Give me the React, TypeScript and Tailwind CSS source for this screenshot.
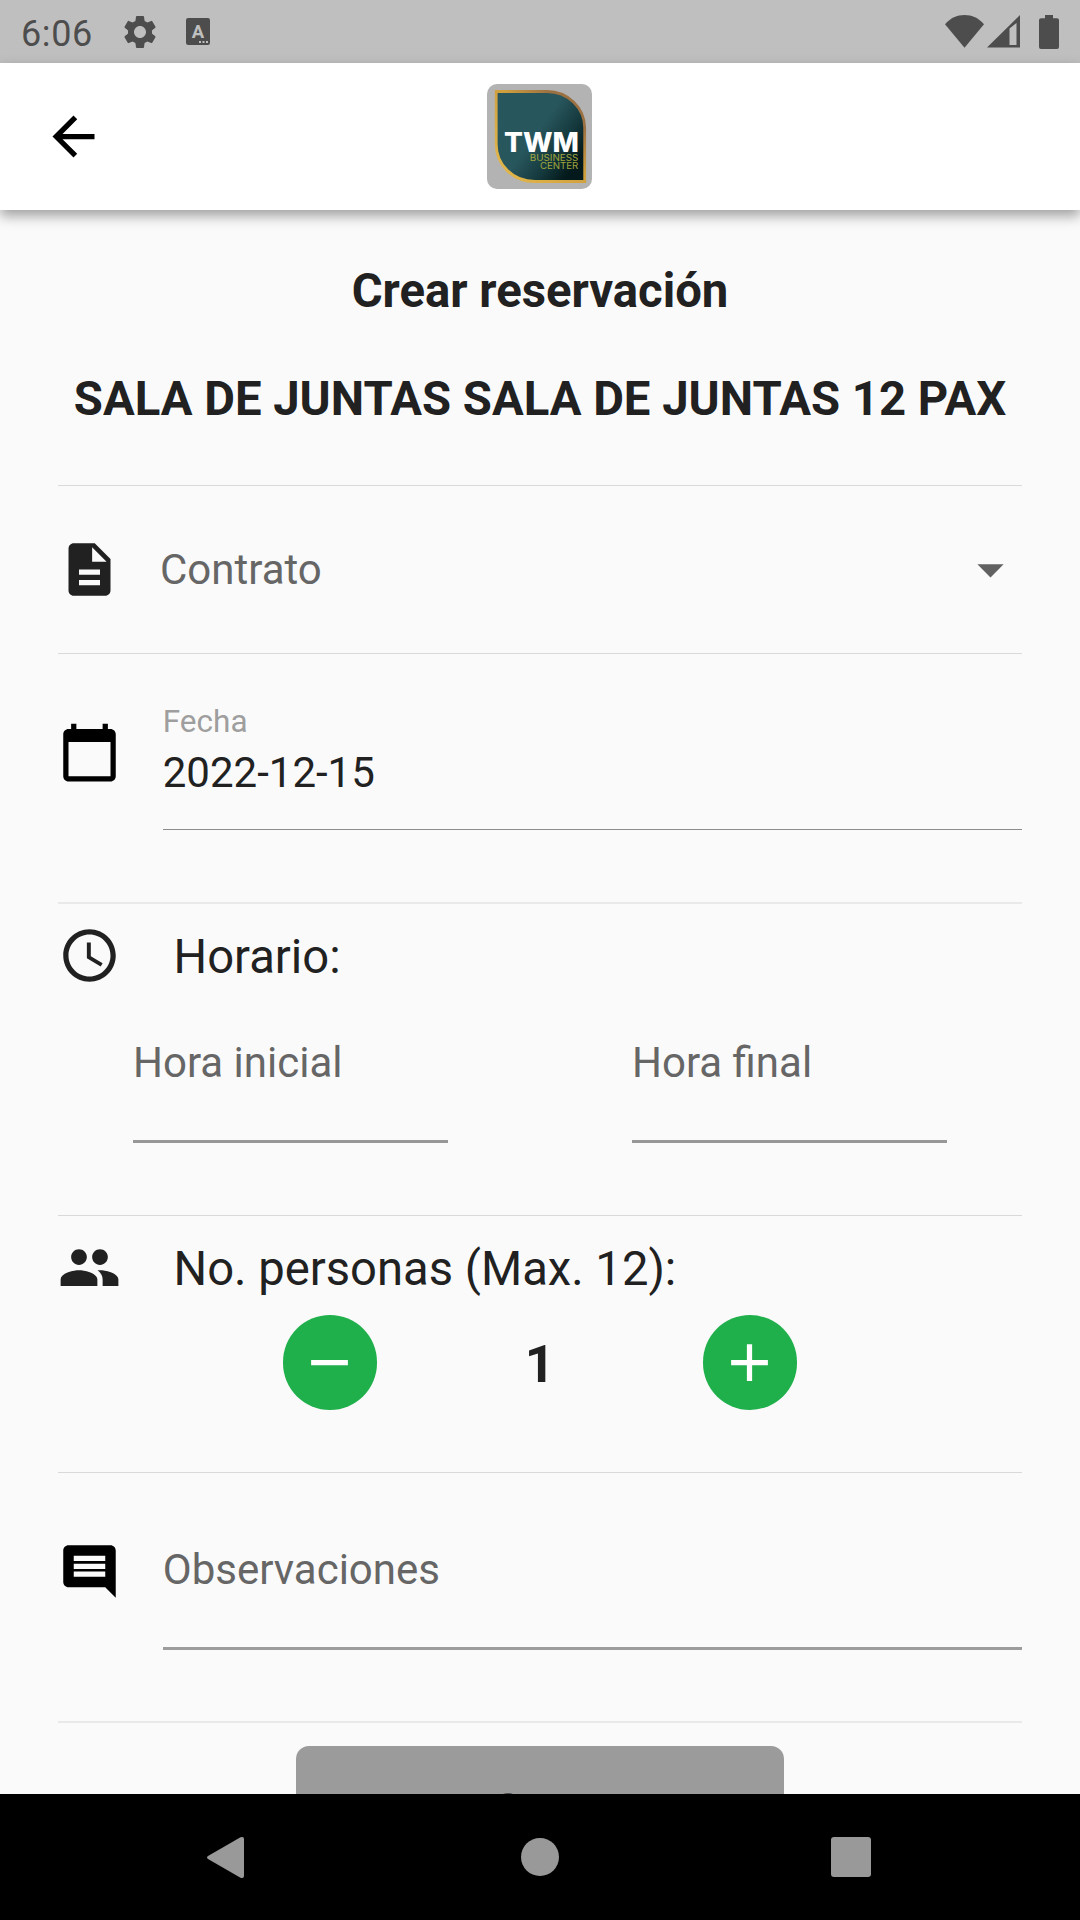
import { useState, type ReactNode } from 'react';
import {
  MdAccessTime,
  MdAdd,
  MdArrowBack,
  MdArrowDropDown,
  MdCalendarToday,
  MdComment,
  MdDescription,
  MdPeople,
  MdRemove,
  MdSettings,
} from 'react-icons/md';

const MAX_PEOPLE = 12;

function StatusBar() {
  return (
    <header className="flex h-[63px] shrink-0 items-center bg-[#bfbfbf] pl-[21px] pr-[21px] text-[#4d4d4d]">
      <span className="mt-[4px] w-[72px] text-[36px] leading-[42px] tracking-[0.6px]">6:06</span>
      <MdSettings className="ml-[27px] size-[40px]" />
      <svg className="ml-[26px] h-[27px] w-[24px]" viewBox="0 0 24 27">
        <rect width="24" height="27" rx="2.2" fill="#4d4d4d" />
        <text x="12" y="19.5" textAnchor="middle" fontFamily="Roboto, sans-serif" fontWeight="700" fontSize="18.5" fill="#bfbfbf">A</text>
        <path d="M13 23h2v2h-2zM16.5 23h2v2h-2zM20 23h2v2h-2z" fill="#bfbfbf" />
      </svg>
      <div className="ml-auto flex items-center">
        <svg className="h-[33px] w-[39px]" viewBox="0 0 39 33">
          <path d="M0 9.3C5.5 3 12 0 19.5 0S33.5 3 39 9.3L19.5 32.7z" fill="currentColor" />
        </svg>
        <svg className="ml-[3px] h-[33px] w-[33px]" viewBox="0 0 33 33">
          <path fillRule="evenodd" d="M0 32.5L33 0v32.5zM22.5 13.5v16.5h7V8z" fill="currentColor" />
        </svg>
        <svg className="ml-[19px] mt-[1px] h-[34px] w-[20px]" viewBox="0 0 20 34">
          <path d="M6 0h8v3.3h4a2 2 0 0 1 2 2V32a2 2 0 0 1-2 2H2a2 2 0 0 1-2-2V5.3a2 2 0 0 1 2-2h4z" fill="currentColor" />
        </svg>
      </div>
    </header>
  );
}

function Logo() {
  return (
    <svg className="size-[105px]" viewBox="0 0 105 105">
      <defs>
        <linearGradient id="leaf" x1="0.1" y1="0.1" x2="1" y2="0.75">
          <stop offset="0.45" stopColor="#28565d" />
          <stop offset="0.72" stopColor="#153a3e" />
          <stop offset="0.95" stopColor="#04191b" />
        </linearGradient>
        <linearGradient id="gold" x1="0" y1="1" x2="1" y2="0">
          <stop offset="0" stopColor="#e3b94c" />
          <stop offset="0.3" stopColor="#d9ac45" />
          <stop offset="0.55" stopColor="#cf9f3e" />
          <stop offset="0.8" stopColor="#9c7142" />
        </linearGradient>
      </defs>
      <rect width="105" height="105" rx="10" fill="#b3b3b3" />
      <path
        d="M9.2 7.5H60C81 7.5 97.7 24 97.7 44V97.5H48C26 97.5 9.2 81 9.2 60z"
        fill="url(#leaf)"
        stroke="url(#gold)"
        strokeWidth="2.8"
      />
      <g fontFamily="Inter, sans-serif">
        <text x="17" y="67.7" fontSize="26.5" fontWeight="800" fill="#fff" textLength="75" lengthAdjust="spacingAndGlyphs">TWM</text>
        <text x="42.8" y="76.5" fontSize="8.8" fill="#a0a53c" textLength="48.5" lengthAdjust="spacingAndGlyphs">BUSINESS</text>
        <text x="53" y="84.5" fontSize="8.8" fill="#a0a53c" textLength="38.3" lengthAdjust="spacingAndGlyphs">CENTER</text>
      </g>
    </svg>
  );
}

function AppBar() {
  return (
    <div className="relative z-10 grid h-[147px] shrink-0 grid-cols-3 items-center bg-white shadow-[0_6px_12px_rgba(0,0,0,0.36)]">
      <button type="button" className="ml-[42px] w-fit text-black">
        <MdArrowBack className="size-[63px]" />
      </button>
      <div className="flex justify-center pr-[2px]">
        <Logo />
      </div>
    </div>
  );
}

function Divider({ soft = false }: { soft?: boolean }) {
  return <div className={soft ? 'h-[2px] bg-[#e9e9e9]' : 'h-px bg-[#d9d9d9]'} />;
}

function Placeholder({ children }: { children: ReactNode }) {
  return <div className="text-[42px] leading-[49px] text-[#666666]">{children}</div>;
}

function TimeField({ label }: { label: string }) {
  return (
    <div className="w-[315px] border-b-[3px] border-[#979797] pb-[53px]">
      <Placeholder>{label}</Placeholder>
    </div>
  );
}

function NavBar() {
  return (
    <nav className="flex h-[126px] shrink-0 items-center justify-between bg-black pl-[206px] pr-[209px] text-[#999999]">
      <svg className="h-[43px] w-[38px]" viewBox="0 0 38 43">
        <path d="M2 20L34.5 1.3Q38 0 38 3V40Q38 43 34.5 41.7L2 23Q0 21.5 2 20z" fill="currentColor" />
      </svg>
      <div className="ml-[5px] size-[38px] rounded-full bg-[#999999]" />
      <div className="size-[40px] rounded-[3px] bg-[#999999]" />
    </nav>
  );
}

export default function App() {
  const [people, setPeople] = useState(1);

  return (
    <div className="flex h-[1920px] w-[1080px] flex-col overflow-hidden bg-[#fafafa] font-['Roboto',sans-serif] text-[#212121]">
      <StatusBar />
      <AppBar />

      <main className="min-h-0 flex-1 overflow-hidden px-[57.75px]">
        <section className="flex h-[275px] flex-col items-center gap-[53px] pt-[54px] text-[47.25px] font-bold leading-[55px]">
          <h1>Crear reservación</h1>
          <h2 className="whitespace-nowrap">SALA DE JUNTAS SALA DE JUNTAS 12 PAX</h2>
        </section>
        <Divider />

        <section className="flex h-[167px] items-center">
          <MdDescription className="size-[63px]" />
          <div className="ml-[39.25px] flex-1">
            <Placeholder>Contrato</Placeholder>
          </div>
          <MdArrowDropDown className="size-[63px] text-[#616161]" />
        </section>
        <Divider />

        <section className="flex h-[248px] gap-[42px]">
          <MdCalendarToday className="mt-[67px] size-[63px] shrink-0 text-black" />
          <div className="flex-1 pt-[49px]">
            <div className="text-[31.5px] leading-[37px] text-[#9e9e9e]">Fecha</div>
            <div className="mt-[8px] border-b border-[#8c8c8c] pb-[32px] text-[42px] leading-[49px]">2022-12-15</div>
          </div>
        </section>
        <Divider soft />

        <section className="h-[311px] pt-[20px]">
          <div className="flex items-center">
            <MdAccessTime className="size-[63px]" />
            <span className="ml-[52.75px] mt-[3px] text-[47.2px] leading-[55px]">Horario:</span>
          </div>
          <div className="mt-[51px] flex gap-[184px] pl-[75.25px]">
            <TimeField label="Hora inicial" />
            <TimeField label="Hora final" />
          </div>
        </section>
        <Divider />

        <section className="h-[256px] pt-[20px]">
          <div className="flex items-center">
            <MdPeople className="size-[63px]" />
            <span className="ml-[52.75px] mt-[3px] text-[47.2px] leading-[55px]">No. personas (Max. {MAX_PEOPLE}):</span>
          </div>
          <div className="mt-[16px] flex items-center pl-[224.75px]">
            <button
              type="button"
              onClick={() => setPeople(Math.max(1, people - 1))}
              className="flex size-[94.5px] items-center justify-center rounded-full bg-[#1faf4b] text-white"
            >
              <MdRemove className="size-[63px]" />
            </button>
            <span className="mt-[3px] w-[325.5px] text-center text-[52.5px] font-bold leading-[62px]">{people}</span>
            <button
              type="button"
              onClick={() => setPeople(Math.min(MAX_PEOPLE, people + 1))}
              className="flex size-[94.5px] items-center justify-center rounded-full bg-[#1faf4b] text-white"
            >
              <MdAdd className="size-[63px]" />
            </button>
          </div>
        </section>
        <Divider />

        <section className="flex h-[248px] gap-[42px]">
          <MdComment className="mt-[67px] size-[63px] shrink-0 text-black" />
          <div className="flex-1 pt-[72px]">
            <div className="border-b-[3px] border-[#9c9c9c] pb-[53px]">
              <Placeholder>Observaciones</Placeholder>
            </div>
          </div>
        </section>
        <Divider soft />

        <button
          type="button"
          className="mx-auto mt-[23px] block h-[122px] w-[488px] rounded-[13px] bg-[#9b9b9b] text-[36.75px] font-medium text-[#4a4a4a]"
        >
          Crear
        </button>
      </main>

      <NavBar />
    </div>
  );
}
